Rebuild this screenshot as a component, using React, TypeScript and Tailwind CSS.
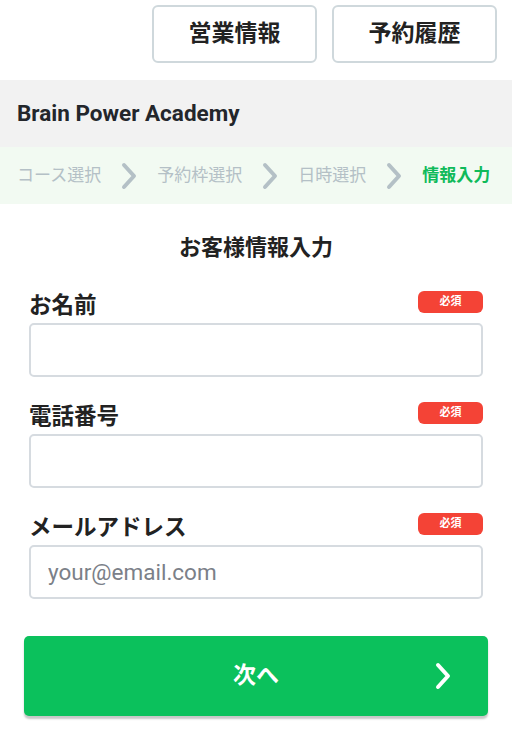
import React from "react";

const font = { fontFamily: '"Roboto", "Noto Sans CJK JP", sans-serif' };

function Chevron({ className }: { className: string }) {
  return (
    <svg viewBox="0 0 16 28" className={className} fill="none">
      <path d="M3 3l10 11L3 25" stroke="currentColor" strokeWidth="4" strokeLinecap="round" strokeLinejoin="round" />
    </svg>
  );
}

function Field({ label, placeholder }: { label: string; placeholder?: string }) {
  return (
    <div className="flex flex-col">
      <div className="flex items-start justify-between h-[22px]">
        <span className="text-[22.5px] font-bold text-[#222] leading-[28px]">{label}</span>
        <span className="w-[65px] h-[22px] rounded-[6px] bg-[#f44336] text-white text-[11px] font-bold flex items-center justify-center">
          必須
        </span>
      </div>
      <input
        className="mt-[10px] h-[54px] w-full rounded-[5px] border-2 border-[#d6dbe0] px-[17px] text-[22.5px] text-[#333] placeholder:text-[#7b8088] outline-none"
        placeholder={placeholder}
      />
    </div>
  );
}

export default function App() {
  const steps = ["コース選択", "予約枠選択", "日時選択"];
  return (
    <div className="w-[512px] h-[751px] bg-white overflow-hidden" style={font}>
      <div className="h-[80px] flex justify-end gap-[15px] pt-[5px] pr-[15px]">
        <button className="w-[165px] h-[58px] rounded-[6px] border-2 border-[#cfd8dc] text-[23px] font-bold text-[#222]">
          営業情報
        </button>
        <button className="w-[165px] h-[58px] rounded-[6px] border-2 border-[#cfd8dc] text-[23px] font-bold text-[#222]">
          予約履歴
        </button>
      </div>
      <div className="h-[67px] bg-[#f2f2f2] flex items-center px-[17px]">
        <span className="text-[22.5px] font-bold text-[#23262b]">Brain Power Academy</span>
      </div>
      <div className="h-[57px] bg-[#f2faf2] flex items-center pl-[17px] gap-[20px]">
        {steps.map((s) => (
          <React.Fragment key={s}>
            <span className="text-[17px] text-[#b4c0c6]">{s}</span>
            <Chevron className="w-[16px] h-[28px] text-[#b4c0c6]" />
          </React.Fragment>
        ))}
        <span className="text-[17px] font-bold text-[#0fba5a]">情報入力</span>
      </div>
      <div className="pt-[30px] text-center">
        <h1 className="text-[22px] font-bold text-[#222] leading-[28px]">お客様情報入力</h1>
      </div>
      <div className="px-[29px] pt-[29px] flex flex-col gap-[25px]">
        <Field label="お名前" />
        <Field label="電話番号" />
        <Field label="メールアドレス" placeholder="your@email.com" />
      </div>
      <div className="px-[24px] pt-[37px]">
        <button className="relative w-full h-[80px] rounded-[5px] bg-[#0bc15c] shadow-[0_3px_2px_rgba(0,0,0,0.22)] flex items-center justify-center">
          <span className="text-[23px] font-bold text-white">次へ</span>
          <Chevron className="absolute right-[37px] top-[26px] w-[16px] h-[28px] text-white" />
        </button>
      </div>
    </div>
  );
}
